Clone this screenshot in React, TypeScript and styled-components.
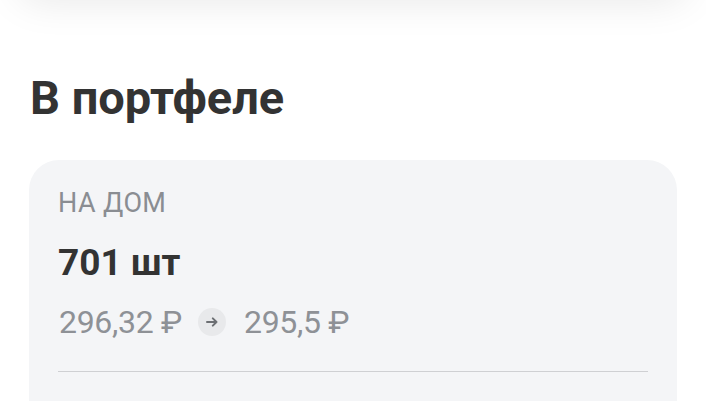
import React from 'react'
import styled, { createGlobalStyle } from 'styled-components'

const GlobalStyle = createGlobalStyle`
  html, body {
    margin: 0;
    padding: 0;
    background: #ffffff;
    font-family: Roboto, 'Noto Sans', sans-serif;
    overflow: hidden;
  }
`

const Page = styled.div`
  width: 706px;
  height: 401px;
  overflow: hidden;
  background: #ffffff;
`

// card that sits above the visible area, only its shadow shows
const TopCard = styled.div`
  height: 40px;
  margin: -52px 18px 0;
  border-radius: 28px;
  background: #ffffff;
  box-shadow: 0 12px 40px rgba(0, 0, 0, 0.1);
`

const Title = styled.h2`
  margin: 83px 0 0 30px;
  font-size: 47px;
  line-height: 54px;
  font-weight: 700;
  color: #333333;
`

const Card = styled.div`
  margin: 35px 29px 0;
  height: 300px;
  padding: 27px 29px 0 29px;
  border-radius: 30px;
  background: #f4f5f7;
`

const Label = styled.div`
  font-size: 27px;
  line-height: 32px;
  letter-spacing: 0.4px;
  color: #8a8d92;
  text-transform: uppercase;
`

const Amount = styled.div`
  margin-top: 22px;
  font-size: 37px;
  line-height: 44px;
  font-weight: 700;
  color: #333333;
`

const PriceRow = styled.div`
  margin-top: 17px;
  display: flex;
  align-items: center;
  gap: 16px;
  padding-left: 1px;
  font-size: 32px;
  line-height: 40px;
  color: #8e9196;
`

const Price = styled.span`
  letter-spacing: -0.3px;
`

const ArrowBadge = styled.span`
  width: 28px;
  height: 28px;
  margin-right: 2px;
  border-radius: 50%;
  background: #e8e9eb;
  display: flex;
  align-items: center;
  justify-content: center;
`

const Divider = styled.div`
  margin-top: 29px;
  height: 1px;
  background: #cfd0d3;
`

const App: React.FC = () => (
  <Page>
    <GlobalStyle />
    <TopCard />
    <Title>В портфеле</Title>
    <Card>
      <Label>На дом</Label>
      <Amount>701 шт</Amount>
      <PriceRow>
        <Price>296,32 ₽</Price>
        <ArrowBadge>
          <svg width='16' height='16' viewBox='0 0 16 16' fill='none'>
            <path
              d='M3 8h9.5M8.8 4.4 12.5 8l-3.7 3.6'
              stroke='#6c6f73'
              strokeWidth='2'
              strokeLinecap='round'
              strokeLinejoin='round'
            />
          </svg>
        </ArrowBadge>
        <Price>295,5 ₽</Price>
      </PriceRow>
      <Divider />
    </Card>
  </Page>
)

export default App
